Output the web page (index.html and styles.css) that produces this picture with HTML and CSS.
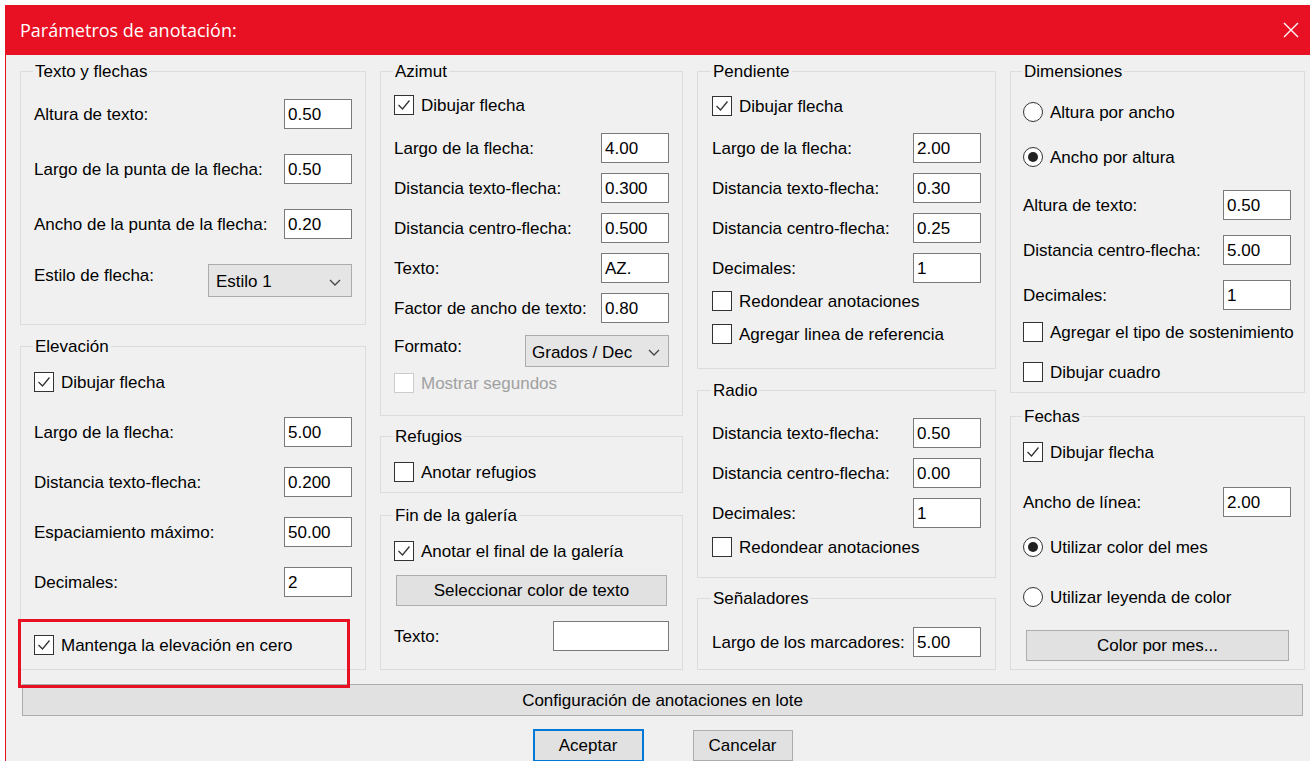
FILE: index.html
```html
<!DOCTYPE html>
<html lang="es">
<head>
<meta charset="utf-8">
<title>Parámetros de anotación</title>
<link rel="stylesheet" href="styles.css">
</head>
<body>
<div class="window">
  <header class="titlebar">
    <span class="title">Parámetros de anotación:</span>
    <svg class="close" width="16" height="16" viewBox="0 0 16 16"><path d="M1 1L15 15M15 1L1 15" stroke="#fff" stroke-width="1.4" fill="none"/></svg>
  </header>

  <main class="dialog">
    <div class="columns">

      <!-- column 1 -->
      <div class="col">
        <section class="group g-texto">
          <h2 class="group-title">Texto y flechas</h2>
          <div class="field mt19"><span>Altura de texto:</span><input type="text" value="0.50"></div>
          <div class="field mt25"><span>Largo de la punta de la flecha:</span><input type="text" value="0.50"></div>
          <div class="field mt25"><span>Ancho de la punta de la flecha:</span><input type="text" value="0.20"></div>
          <div class="field top mt25"><span>Estilo de flecha:</span>
            <div class="select"><span>Estilo 1</span><svg width="12" height="7" viewBox="0 0 12 7"><path d="M1 1L6 6L11 1" fill="none" stroke="#444" stroke-width="1.3"/></svg></div>
          </div>
        </section>

        <section class="group g-elev">
          <h2 class="group-title">Elevación</h2>
          <label class="check mt17"><span class="box"><svg width="18" height="18" viewBox="0 0 18 18"><path d="M3.5 9L7.5 13L14.5 4.5" fill="none" stroke="#333" stroke-width="1.3"/></svg></span>Dibujar flecha</label>
          <div class="field mt25"><span>Largo de la flecha:</span><input type="text" value="5.00"></div>
          <div class="field mt20"><span>Distancia texto-flecha:</span><input type="text" value="0.200"></div>
          <div class="field mt20"><span>Espaciamiento máximo:</span><input type="text" value="50.00"></div>
          <div class="field mt20"><span>Decimales:</span><input type="text" value="2"></div>
          <label class="check mt38"><span class="box"><svg width="18" height="18" viewBox="0 0 18 18"><path d="M3.5 9L7.5 13L14.5 4.5" fill="none" stroke="#333" stroke-width="1.3"/></svg></span>Mantenga la elevación en cero</label>
        </section>
      </div>

      <!-- column 2 -->
      <div class="col">
        <section class="group g-azimut">
          <h2 class="group-title">Azimut</h2>
          <label class="check mt15"><span class="box"><svg width="18" height="18" viewBox="0 0 18 18"><path d="M3.5 9L7.5 13L14.5 4.5" fill="none" stroke="#333" stroke-width="1.3"/></svg></span>Dibujar flecha</label>
          <div class="field mt18"><span>Largo de la flecha:</span><input type="text" value="4.00"></div>
          <div class="field mt10"><span>Distancia texto-flecha:</span><input type="text" value="0.300"></div>
          <div class="field mt10"><span>Distancia centro-flecha:</span><input type="text" value="0.500"></div>
          <div class="field mt10"><span>Texto:</span><input type="text" value="AZ."></div>
          <div class="field mt10"><span>Factor de ancho de texto:</span><input type="text" value="0.80"></div>
          <div class="field top mt12"><span>Formato:</span>
            <div class="select select-short"><span>Grados / Dec</span><svg width="12" height="7" viewBox="0 0 12 7"><path d="M1 1L6 6L11 1" fill="none" stroke="#444" stroke-width="1.3"/></svg></div>
          </div>
          <label class="check disabled mt8"><span class="box"></span>Mostrar segundos</label>
        </section>

        <section class="group g-refugios">
          <h2 class="group-title">Refugios</h2>
          <label class="check mt17"><span class="box"></span>Anotar refugios</label>
        </section>

        <section class="group g-fin">
          <h2 class="group-title">Fin de la galería</h2>
          <label class="check mt17"><span class="box"><svg width="18" height="18" viewBox="0 0 18 18"><path d="M3.5 9L7.5 13L14.5 4.5" fill="none" stroke="#333" stroke-width="1.3"/></svg></span>Anotar el final de la galería</label>
          <button class="btn btn-inset mt14">Seleccionar color de texto</button>
          <div class="field mt15"><span>Texto:</span><input class="wide" type="text" value=""></div>
        </section>
      </div>

      <!-- column 3 -->
      <div class="col">
        <section class="group g-pend">
          <h2 class="group-title">Pendiente</h2>
          <label class="check mt16"><span class="box"><svg width="18" height="18" viewBox="0 0 18 18"><path d="M3.5 9L7.5 13L14.5 4.5" fill="none" stroke="#333" stroke-width="1.3"/></svg></span>Dibujar flecha</label>
          <div class="field mt17"><span>Largo de la flecha:</span><input type="text" value="2.00"></div>
          <div class="field mt10"><span>Distancia texto-flecha:</span><input type="text" value="0.30"></div>
          <div class="field mt10"><span>Distancia centro-flecha:</span><input type="text" value="0.25"></div>
          <div class="field mt10"><span>Decimales:</span><input type="text" value="1"></div>
          <label class="check mt8"><span class="box"></span>Redondear anotaciones</label>
          <label class="check mt13"><span class="box"></span>Agregar linea de referencia</label>
        </section>

        <section class="group g-radio">
          <h2 class="group-title">Radio</h2>
          <div class="field mt19"><span>Distancia texto-flecha:</span><input type="text" value="0.50"></div>
          <div class="field mt10"><span>Distancia centro-flecha:</span><input type="text" value="0.00"></div>
          <div class="field mt10"><span>Decimales:</span><input type="text" value="1"></div>
          <label class="check mt9"><span class="box"></span>Redondear anotaciones</label>
        </section>

        <section class="group g-senal">
          <h2 class="group-title">Señaladores</h2>
          <div class="field mt20"><span>Largo de los marcadores:</span><input type="text" value="5.00"></div>
        </section>
      </div>

      <!-- column 4 -->
      <div class="col">
        <section class="group g-dim">
          <h2 class="group-title">Dimensiones</h2>
          <label class="check mt22"><span class="box round"></span>Altura por ancho</label>
          <label class="check mt25"><span class="box round on"></span>Ancho por altura</label>
          <div class="field mt23"><span>Altura de texto:</span><input type="text" value="0.50"></div>
          <div class="field mt15"><span>Distancia centro-flecha:</span><input type="text" value="5.00"></div>
          <div class="field mt15"><span>Decimales:</span><input type="text" value="1"></div>
          <label class="check mt12"><span class="box"></span>Agregar el tipo de sostenimiento</label>
          <label class="check mt20"><span class="box"></span>Dibujar cuadro</label>
        </section>

        <section class="group g-fechas">
          <h2 class="group-title">Fechas</h2>
          <label class="check mt17"><span class="box"><svg width="18" height="18" viewBox="0 0 18 18"><path d="M3.5 9L7.5 13L14.5 4.5" fill="none" stroke="#333" stroke-width="1.3"/></svg></span>Dibujar flecha</label>
          <div class="field mt25"><span>Ancho de línea:</span><input type="text" value="2.00"></div>
          <label class="check mt20"><span class="box round on"></span>Utilizar color del mes</label>
          <label class="check mt30"><span class="box round"></span>Utilizar leyenda de color</label>
          <button class="btn btn-month mt23">Color por mes...</button>
        </section>
      </div>
    </div>

    <button class="btn batch">Configuración de anotaciones en lote</button>

    <div class="actions">
      <button class="btn btn-ok">Aceptar</button>
      <button class="btn btn-cancel">Cancelar</button>
    </div>
  </main>

  <div class="highlight"></div>
</div>
</body>
</html>
```

FILE: styles.css
```css
* {
  box-sizing: border-box;
}

html,
body {
  margin: 0;
  padding: 0;
  background: #fff;
}

body {
  font-family: "Liberation Sans", Arial, sans-serif;
  font-size: 17px;
  color: #000;
}

/* window frame */
.window {
  position: relative;
  margin: 5px 0 0 5px;
  width: 1305px;
  height: 756px;
  border-left: 1px solid #e81123;
  background: #f0f0f0;
  overflow: hidden;
}

.titlebar {
  height: 50px;
  background: #e81123;
  display: flex;
  align-items: center;
  padding: 0 11px 0 14px;
  color: #fff;
}

.title {
  font-family: "Open Sans", "Noto Sans", sans-serif;
  font-size: 18px;
}

.close {
  margin-left: auto;
}

.dialog {
  padding: 16px 5px 0 14px;
}

/* four columns of group boxes */
.columns {
  display: grid;
  grid-template-columns: 346px 303px 299px 295px;
  column-gap: 14px;
  height: 599px;
}

.col {
  display: flex;
  flex-direction: column;
}

.group {
  border: 1px solid #dcdcdc;
  padding: 0 13px;
  display: flex;
  flex-direction: column;
}

.group:last-child {
  flex: 1;
}

.group-title {
  align-self: flex-start;
  margin: -10px 0 0 -1px;
  padding: 0 2px;
  height: 18px;
  line-height: 19px;
  font-size: 17px;
  font-weight: normal;
  background: #f0f0f0;
}

/* group spacing */
.g-texto { padding-bottom: 30px; }
.g-elev { margin-top: 21px; }
.g-azimut { padding-bottom: 22px; }
.g-refugios { margin-top: 20px; padding-bottom: 10px; }
.g-fin { margin-top: 22px; }
.g-pend { padding: 0 14px 24px; }
.g-radio { margin-top: 21px; padding: 0 14px 20px; }
.g-senal { margin-top: 20px; padding: 0 14px; }
.g-dim { padding: 0 13px 10px 12px; }
.g-fechas { margin-top: 23px; padding: 0 13px 0 12px; }

.g-azimut input,
.g-pend input,
.g-radio input,
.g-senal input {
  width: 67px;
}

/* label + value rows */
.field {
  display: flex;
  justify-content: space-between;
  align-items: center;
  height: 30px;
  line-height: 20px;
  white-space: nowrap;
}

.field > span {
  padding-top: 2px;
}

.field.top {
  align-items: flex-start;
}

.field.top > span {
  margin-top: 0;
}

.field input {
  width: 68px;
  height: 30px;
  margin: 0;
  padding: 1px 3px 0;
  border: 1px solid #7a7a7a;
  background: #fff;
  font: inherit;
  color: #000;
  outline: none;
}

.field input.wide {
  width: 116px;
}

.select {
  width: 144px;
  height: 33px;
  display: flex;
  align-items: center;
  justify-content: space-between;
  padding: 3px 10px 0 7px;
  border: 1px solid #acacac;
  background: #e5e5e5;
}

.select-short {
  height: 32px;
  padding-left: 6px;
  padding-right: 8px;
}

/* check boxes and radio buttons */
.check {
  display: flex;
  align-items: center;
  gap: 7px;
  height: 20px;
  line-height: 20px;
  white-space: nowrap;
  padding-top: 1px;
}

.box {
  flex: none;
  width: 20px;
  height: 20px;
  margin-top: -1px;
  border: 1px solid #333;
  background: #fff;
  display: flex;
  align-items: center;
  justify-content: center;
}

.box.round {
  border-radius: 50%;
}

.box.round.on::after {
  content: "";
  width: 10px;
  height: 10px;
  border-radius: 50%;
  background: #222;
}

.check.disabled {
  color: #a0a0a0;
}

.check.disabled .box {
  border-color: #cccccc;
}

/* buttons */
.btn {
  display: block;
  margin: 0;
  padding: 1px 0 0;
  font: inherit;
  color: #000;
  background: #e1e1e1;
  border: 1px solid #adadad;
  text-align: center;
}

.btn-inset {
  height: 31px;
  margin: 0 2px;
}

.btn-month {
  height: 31px;
  margin: 0 2px 0 3px;
}

.batch {
  width: calc(100% - 4px);
  height: 32px;
  margin: 14px 2px 0;
}

.actions {
  display: flex;
  justify-content: center;
  align-items: flex-start;
  gap: 49px;
  margin-top: 13px;
}

.btn-ok {
  width: 111px;
  height: 33px;
  border: 2px solid #0078d7;
}

.btn-cancel {
  width: 100px;
  height: 31px;
  margin-top: 1px;
}

/* red frame drawn over the "Mantenga" option */
.highlight {
  position: absolute;
  left: 12px;
  top: 614px;
  width: 332px;
  height: 69px;
  border: 3px solid #e81123;
  pointer-events: none;
}

/* spacing helpers */
.mt8 { margin-top: 8px; }
.mt9 { margin-top: 9px; }
.mt10 { margin-top: 10px; }
.mt12 { margin-top: 12px; }
.mt13 { margin-top: 13px; }
.mt14 { margin-top: 14px; }
.mt15 { margin-top: 15px; }
.mt16 { margin-top: 16px; }
.mt17 { margin-top: 17px; }
.mt18 { margin-top: 18px; }
.mt19 { margin-top: 19px; }
.mt20 { margin-top: 20px; }
.mt22 { margin-top: 22px; }
.mt23 { margin-top: 23px; }
.mt25 { margin-top: 25px; }
.mt30 { margin-top: 30px; }
.mt38 { margin-top: 38px; }
```
